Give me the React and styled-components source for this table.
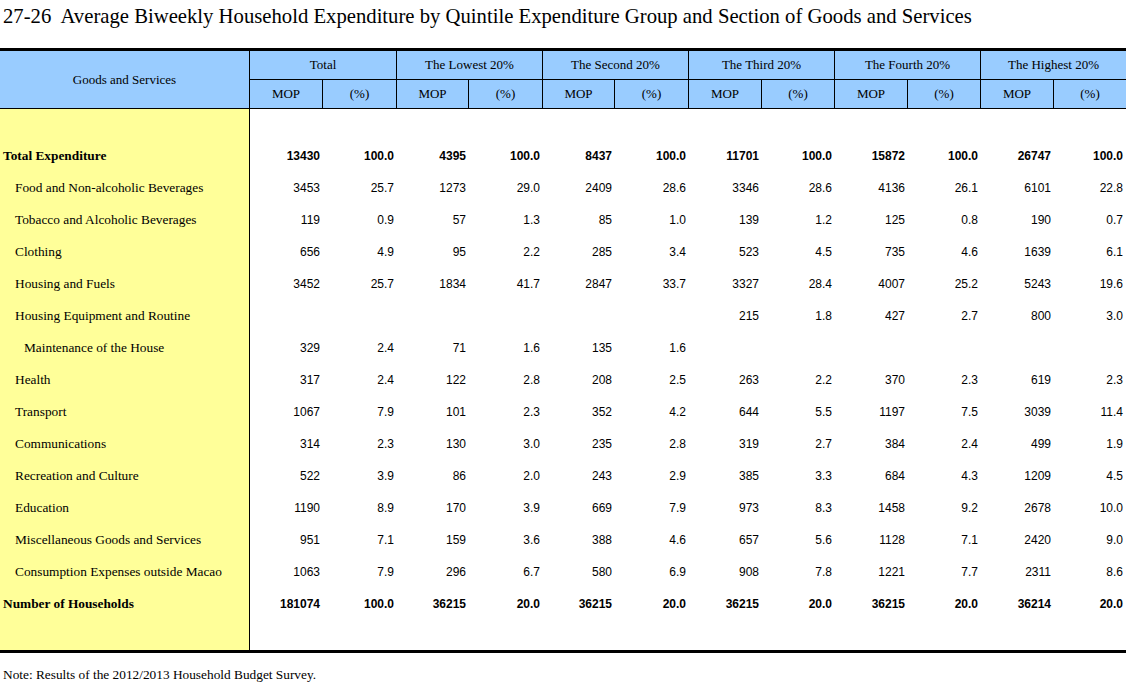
import React from "react";
import styled, { createGlobalStyle } from "styled-components";

const GlobalStyle = createGlobalStyle`
  html, body { margin: 0; padding: 0; background: #ffffff; }
  body { font-family: "Liberation Serif", "Times New Roman", serif; color: #000; }
`;

const Page = styled.div`
  width: 1126px;
  display: flex;
  flex-direction: column;
`;

const Title = styled.h1`
  margin: 0;
  padding: 4px 0 0 3px;
  font-family: "Liberation Serif", "Times New Roman", serif;
  font-weight: normal;
  font-size: 20.7px;
  line-height: 24px;
  white-space: pre;
`;

const Table = styled.table`
  margin-top: 20px;
  width: 1126px;
  table-layout: fixed;
  border-collapse: separate;
  border-spacing: 0;
  border-top: 3px solid #000;
  border-bottom: 3px solid #000;
`;

const HeadCell = styled.th`
  background: #99ccff;
  font-family: "Liberation Serif", "Times New Roman", serif;
  font-weight: normal;
  font-size: 13px;
  text-align: center;
  vertical-align: middle;
  padding: 0 0 ${(p) => (p.$tall ? 0 : 1)}px;
  height: ${(p) => (p.$tall ? 57 : 27)}px;
  border-bottom: 1px solid #000;
  border-right: ${(p) => (p.$last ? "none" : "1px solid #000")};
`;

const LabelCell = styled.td`
  background: #ffff99;
  border-right: 1px solid #000;
  padding: 0 0 0 ${(p) => p.$indent}px;
  height: ${(p) => p.$h}px;
  font-family: "Liberation Serif", "Times New Roman", serif;
  font-size: 13.33px;
  font-weight: ${(p) => (p.$bold ? "bold" : "normal")};
  white-space: nowrap;
  vertical-align: middle;
`;

const NumCell = styled.td`
  padding: 0 3px 0 0;
  text-align: right;
  font-family: "Liberation Sans", Arial, sans-serif;
  font-size: 12px;
  font-weight: ${(p) => (p.$bold ? "bold" : "normal")};
  vertical-align: middle;
`;

const Note = styled.p`
  margin: 14px 0 0;
  padding-left: 3px;
  font-size: 13.33px;
  line-height: 16px;
  font-family: "Liberation Serif", "Times New Roman", serif;
`;

const colWidths = [250, 73, 74, 72, 74, 72, 74, 73, 73, 73, 73, 73, 72];
const groups = [
  "Total",
  "The Lowest 20%",
  "The Second 20%",
  "The Third 20%",
  "The Fourth 20%",
  "The Highest 20%",
];

const rows = [
  { label: "Total Expenditure", bold: true, indent: 3, vals: ["13430", "100.0", "4395", "100.0", "8437", "100.0", "11701", "100.0", "15872", "100.0", "26747", "100.0"] },
  { label: "Food and Non-alcoholic Beverages", indent: 15, vals: ["3453", "25.7", "1273", "29.0", "2409", "28.6", "3346", "28.6", "4136", "26.1", "6101", "22.8"] },
  { label: "Tobacco and Alcoholic Beverages", indent: 15, vals: ["119", "0.9", "57", "1.3", "85", "1.0", "139", "1.2", "125", "0.8", "190", "0.7"] },
  { label: "Clothing", indent: 15, vals: ["656", "4.9", "95", "2.2", "285", "3.4", "523", "4.5", "735", "4.6", "1639", "6.1"] },
  { label: "Housing and Fuels", indent: 15, vals: ["3452", "25.7", "1834", "41.7", "2847", "33.7", "3327", "28.4", "4007", "25.2", "5243", "19.6"] },
  { label: "Housing Equipment and Routine", indent: 15, vals: ["", "", "", "", "", "", "215", "1.8", "427", "2.7", "800", "3.0"] },
  { label: "Maintenance of the House", indent: 24, vals: ["329", "2.4", "71", "1.6", "135", "1.6", "", "", "", "", "", ""] },
  { label: "Health", indent: 15, vals: ["317", "2.4", "122", "2.8", "208", "2.5", "263", "2.2", "370", "2.3", "619", "2.3"] },
  { label: "Transport", indent: 15, vals: ["1067", "7.9", "101", "2.3", "352", "4.2", "644", "5.5", "1197", "7.5", "3039", "11.4"] },
  { label: "Communications", indent: 15, vals: ["314", "2.3", "130", "3.0", "235", "2.8", "319", "2.7", "384", "2.4", "499", "1.9"] },
  { label: "Recreation and Culture", indent: 15, vals: ["522", "3.9", "86", "2.0", "243", "2.9", "385", "3.3", "684", "4.3", "1209", "4.5"] },
  { label: "Education", indent: 15, vals: ["1190", "8.9", "170", "3.9", "669", "7.9", "973", "8.3", "1458", "9.2", "2678", "10.0"] },
  { label: "Miscellaneous Goods and Services", indent: 15, vals: ["951", "7.1", "159", "3.6", "388", "4.6", "657", "5.6", "1128", "7.1", "2420", "9.0"] },
  { label: "Consumption Expenses outside Macao", indent: 15, vals: ["1063", "7.9", "296", "6.7", "580", "6.9", "908", "7.8", "1221", "7.7", "2311", "8.6"] },
  { label: "Number of Households", bold: true, indent: 3, vals: ["181074", "100.0", "36215", "20.0", "36215", "20.0", "36215", "20.0", "36215", "20.0", "36214", "20.0"] },
];

function SpacerRow({ h }) {
  return (
    <tr>
      <LabelCell $h={h} $indent={0} />
      <td colSpan={12} />
    </tr>
  );
}

export default function App() {
  return (
    <Page>
      <GlobalStyle />
      <Title>{"27-26  Average Biweekly Household Expenditure by Quintile Expenditure Group and Section of Goods and Services"}</Title>
      <Table>
        <colgroup>
          {colWidths.map((w, i) => (
            <col key={i} style={{ width: w }} />
          ))}
        </colgroup>
        <thead>
          <tr>
            <HeadCell rowSpan={2} $tall>Goods and Services</HeadCell>
            {groups.map((g, i) => (
              <HeadCell key={g} colSpan={2} $last={i === groups.length - 1}>
                {g}
              </HeadCell>
            ))}
          </tr>
          <tr>
            {groups.flatMap((g, i) => [
              <HeadCell key={g + "m"}>MOP</HeadCell>,
              <HeadCell key={g + "p"} $last={i === groups.length - 1}>(%)</HeadCell>,
            ])}
          </tr>
        </thead>
        <tbody>
          <SpacerRow h={31} />
          {rows.map((r) => (
            <tr key={r.label}>
              <LabelCell $h={32} $indent={r.indent} $bold={r.bold}>
                {r.label}
              </LabelCell>
              {r.vals.map((v, i) => (
                <NumCell key={i} $bold={r.bold}>
                  {v}
                </NumCell>
              ))}
            </tr>
          ))}
          <SpacerRow h={30} />
        </tbody>
      </Table>
      <Note>Note: Results of the 2012/2013 Household Budget Survey.</Note>
    </Page>
  );
}
